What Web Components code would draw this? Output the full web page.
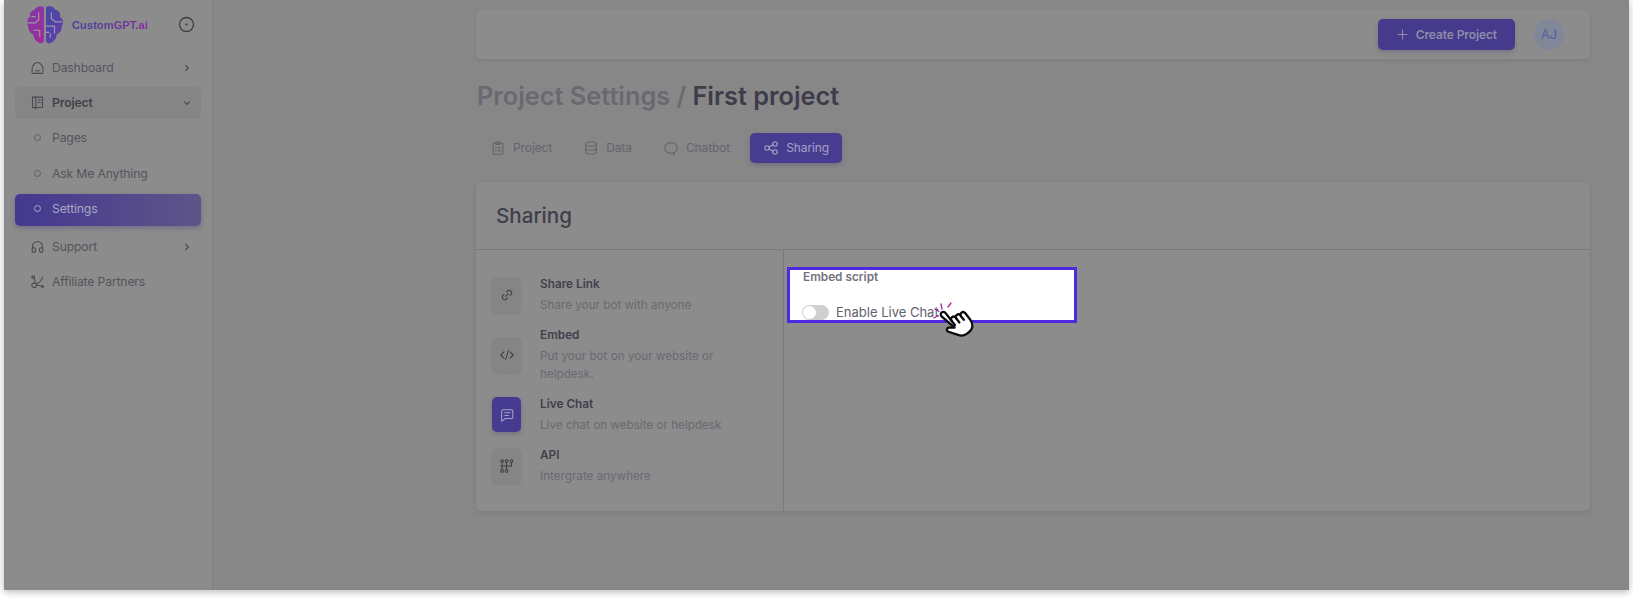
<!DOCTYPE html>
<html lang="en">
<head>
<meta charset="utf-8">
<title>Project Settings</title>
<style>
    html, body { margin: 0; padding: 0; background: #fff; }
    body { font-family: Inter, "Liberation Sans", sans-serif; }
</style>
</head>
<body>
<app-shell>
    <side-nav slot="side"></side-nav>
    <top-bar></top-bar>
    <page-heading muted="Project Settings /" strong="First project"></page-heading>
    <page-tabs></page-tabs>
    <share-card title-text="Sharing">
        <share-option slot="options" icon="link" name="Share Link" text="Share your bot with anyone"></share-option>
        <share-option slot="options" icon="code" name="Embed" text="Put your bot on your website or helpdesk."></share-option>
        <share-option slot="options" icon="chat" name="Live Chat" text="Live chat on website or helpdesk" active></share-option>
        <share-option slot="options" icon="api" name="API" text="Intergrate anywhere"></share-option>
        <embed-box></embed-box>
    </share-card>
    <click-hand slot="over"></click-hand>
</app-shell>

<script>
const ICONS = {
    home: '<path d="M2.500 10.500C2.500 6.500 6 3 9 3s6.500 3.500 6.500 7.500v4.500a1 1 0 0 1-1 1h-11a1 1 0 0 1-1-1z"/><path d="M6.500 12.500c1.500 1 3.500 1 5 0"/>',
    book: '<path d="M3 2.500h12v12.500h-8v1.800l-1.500-1.800H3z"/><path d="M7 2.500v12.500M10 6h2.500M10 9h2.500"/>',
    headset: '<path d="M3 12V9a6 6 0 0 1 12 0v3"/><rect x="2.500" y="10.500" width="4" height="5.500" rx="1.800"/><rect x="11.500" y="10.500" width="4" height="5.500" rx="1.800"/>',
    affiliate: '<circle cx="3.800" cy="3.800" r="1.600"/><circle cx="15" cy="15" r="1.100"/><circle cx="5" cy="13.500" r="2.800"/><path d="M5 5.200c1 2 1.300 3.500 1.200 5.800M7.800 13.500c2.500 0 4.500.5 6.200 1.200M7.500 11.500c3.500-.5 6-3 7.500-7.500"/>',
    clipboard: '<rect x="3.500" y="3.500" width="11" height="12.500" rx="1.500"/><rect x="6.500" y="2" width="5" height="3" rx="1"/><path d="M6 8.500h1M9 8.500h3M6 12h1M9 12h3"/>',
    database: '<ellipse cx="9" cy="4.500" rx="6" ry="2.500"/><path d="M3 4.500v9c0 1.400 2.700 2.500 6 2.500s6-1.100 6-2.500v-9M3 9c0 1.400 2.700 2.500 6 2.500s6-1.100 6-2.500"/>',
    bubble: '<path d="M9 3c4 0 7 2.300 7 5.800s-2.500 5.500-4.500 5.700l1 2.200-4-2.100C4.500 14.500 2 12.300 2 8.800S5 3 9 3z"/>',
    share: '<circle cx="4.500" cy="9" r="2.500"/><circle cx="13.500" cy="4.500" r="2.500"/><circle cx="13.500" cy="13.500" r="2.500"/><path d="M6.800 7.900l4.500-2.300M6.800 10.100l4.500 2.300"/>',
    link: '<path d="M7.500 10.500l3-3"/><path d="M8.500 5.500l1.500-1.500a3 3 0 0 1 4 4l-1.500 1.500"/><path d="M9.500 12.500l-1.500 1.500a3 3 0 0 1-4-4l1.500-1.500"/>',
    code: '<path d="M5.500 5.500L2 9l3.500 3.500M12.500 5.500L16 9l-3.500 3.500M10.500 4l-3 10"/>',
    chat: '<path d="M4.500 3h9.500a1.500 1.500 0 0 1 1.500 1.500v7a1.500 1.500 0 0 1-1.500 1.500H7l-4 3V4.500A1.500 1.500 0 0 1 4.500 3z"/><path d="M6.500 6.500h6M6.500 9.500h4"/>',
    api: '<circle cx="3.500" cy="3.500" r="1.500"/><circle cx="8.500" cy="3.500" r="1.500"/><circle cx="14" cy="3.500" r="1.500"/><circle cx="3.500" cy="14.500" r="1.500"/><circle cx="8.500" cy="14.500" r="1.500"/><path d="M3.500 5v8M8.500 5v8M14 5v4H2"/>'
};

function icon(name, size, width) {
    return `<svg width="${size}" height="${size}" viewBox="0 0 18 18" fill="none" stroke="currentColor" stroke-width="${width || 1.3}" stroke-linecap="round" stroke-linejoin="round">${ICONS[name]}</svg>`;
}

class AppShell extends HTMLElement {
    constructor() {
        super();
        this.attachShadow({ mode: 'open' });
        this.shadowRoot.innerHTML = `
            <style>
                :host { display: block; height: 598px; padding-left: 4px; box-sizing: border-box; overflow: hidden; }
                .window {
                    position: relative;
                    display: flex;
                    width: 1625px;
                    height: 590px;
                    background: #878787;
                    box-shadow: 0 2px 7px rgba(0, 0, 0, 0.28);
                }
                .content {
                    flex: 1;
                    min-width: 0;
                    padding: 10px 39px 0 263px;
                }
            </style>
            <div class="window">
                <slot name="side"></slot>
                <div class="content"><slot></slot></div>
                <slot name="over"></slot>
            </div>
        `;
    }
}
customElements.define('app-shell', AppShell);

class NavItem extends HTMLElement {
    constructor() {
        super();
        this.attachShadow({ mode: 'open' });
    }
    connectedCallback() {
        const ic = this.getAttribute('icon');
        const chevron = this.getAttribute('chevron');
        const lead = ic
            ? icon(ic, 15)
            : '<span class="dot"></span>';
        const chev = chevron === 'down'
            ? '<svg class="chev" width="12" height="12" viewBox="0 0 12 12" fill="none" stroke="currentColor" stroke-width="1.200" stroke-linecap="round" stroke-linejoin="round"><path d="M3.500 4.800L6 7.300l2.500-2.500"/></svg>'
            : chevron
                ? '<svg class="chev" width="12" height="12" viewBox="0 0 12 12" fill="none" stroke="currentColor" stroke-width="1.200" stroke-linecap="round" stroke-linejoin="round"><path d="M4.800 3.500L7.300 6 4.800 8.500"/></svg>'
                : '';
        this.shadowRoot.innerHTML = `
            <style>
                :host { display: block; margin-top: var(--nav-gap, 3px); }
                .row {
                    display: flex;
                    align-items: center;
                    height: 32px;
                    box-sizing: border-box;
                    padding: 0 8px 1px 15px;
                    border-radius: 5px;
                    font-size: 12.200px;
                    letter-spacing: -0.15px;
                    color: #55545c;
                }
                .lead { width: 15px; display: flex; justify-content: center; margin-right: 7px; color: #4a4a52; }
                .dot { width: 5px; height: 5px; border: 1.300px solid #5f5f66; border-radius: 50%; }
                .label { flex: 1; }
                .chev { color: #4a4a52; }
                :host([open]) .row { background: #858585; color: #41404a; font-weight: 600; }
                :host([current]) .row {
                    padding-bottom: 3px;
                    background: linear-gradient(90deg, #443890, #5e5589);
                    box-shadow: 0 2px 5px rgba(60, 50, 130, 0.35);
                    color: #a9a6c4;
                }
                :host([current]) .dot { border-color: #a9a6c4; border-width: 1.600px; }
            </style>
            <div class="row">
                <span class="lead">${lead}</span>
                <span class="label">${this.getAttribute('label')}</span>
                ${chev}
            </div>
        `;
    }
}
customElements.define('nav-item', NavItem);

class SideNav extends HTMLElement {
    constructor() {
        super();
        this.attachShadow({ mode: 'open' });
        this.shadowRoot.innerHTML = `
            <style>
                :host {
                    display: block;
                    flex: none;
                    width: 209px;
                    box-sizing: border-box;
                    background: #8c8c8c;
                    border-right: 1px solid #828282;
                    font-family: Inter, "Liberation Sans", sans-serif;
                }
                .brand {
                    display: flex;
                    align-items: center;
                    height: 49px;
                    padding-left: 22px;
                    padding-right: 17px;
                    box-sizing: border-box;
                }
                .name {
                    flex: 1;
                    margin-left: 8px;
                    font: 700 11.200px "Liberation Sans", sans-serif;
                    background: linear-gradient(90deg, #3f3fa0, #a12c98);
                    -webkit-background-clip: text;
                    background-clip: text;
                    color: transparent;
                }
                .nav { padding: 0 11px 0 11px; }
                .ask { --nav-gap: 4px; }
                .gap { --nav-gap: 5px; }
            </style>
            <div class="brand">
                <svg width="38" height="38" viewBox="1 1 36 36">
                    <defs>
                        <linearGradient id="l" x1="0" y1="0" x2="1" y2="1"><stop offset="0" stop-color="#7b3aa6"/><stop offset="1" stop-color="#a32c98"/></linearGradient>
                        <linearGradient id="r" x1="0" y1="0" x2="1" y2="1"><stop offset="0" stop-color="#3f4aa8"/><stop offset="1" stop-color="#6c3ba6"/></linearGradient>
                    </defs>
                    <path fill="url(#l)" d="M18 2c-4-2-8 0-9 3-3 0-5 3-4 6-3 2-4 6-2 9 0 4 2 7 5 8 0 4 3 7 6 8 2 1 4 0 4-2z"/>
                    <path fill="url(#r)" d="M20 2c4-2 8 0 9 3 3 0 5 3 4 6 3 2 4 6 2 9 0 4-2 7-5 8 0 4-3 7-6 8-2 1-4 0-4-2z"/>
                    <g fill="none" stroke="#9c97ad" stroke-width="1.100">
                        <path d="M2 17h8l3-3V7M8 24h6v6M6 11h4M25 7v6l4 3h6M20 20h8v7M24 31v-4M20 26h3"/>
                    </g>
                </svg>
                <span class="name">CustomGPT.ai</span>
                <svg width="17" height="17" viewBox="0 0 17 17" fill="none" stroke="#3e3e46" stroke-width="1.300"><circle cx="8.500" cy="8.500" r="7"/><circle cx="8.500" cy="8.500" r="1.100" fill="#3e3e46" stroke="none"/></svg>
            </div>
            <div class="nav">
                <nav-item icon="home" label="Dashboard" chevron="right"></nav-item>
                <nav-item icon="book" label="Project" chevron="down" open></nav-item>
                <nav-item label="Pages"></nav-item>
                <nav-item class="ask" label="Ask Me Anything"></nav-item>
                <nav-item class="ask" label="Settings" current></nav-item>
                <nav-item class="gap" icon="headset" label="Support" chevron="right"></nav-item>
                <nav-item icon="affiliate" label="Affiliate Partners"></nav-item>
            </div>
        `;
    }
}
customElements.define('side-nav', SideNav);

class TopBar extends HTMLElement {
    constructor() {
        super();
        this.attachShadow({ mode: 'open' });
        this.shadowRoot.innerHTML = `
            <style>
                :host {
                    display: flex;
                    align-items: center;
                    justify-content: flex-end;
                    gap: 19px;
                    height: 49px;
                    padding-right: 26px;
                    background: #8c8c8c;
                    border-radius: 5px;
                    box-shadow: 0 2px 4px rgba(0, 0, 0, 0.06);
                }
                .btn {
                    display: flex;
                    align-items: center;
                    gap: 8px;
                    height: 31px;
                    padding: 0 18px 0 19px;
                    background: #453a8b;
                    border-radius: 5px;
                    box-shadow: 0 2px 4px rgba(50, 40, 110, 0.25);
                    color: #8f8ca9;
                    font-size: 12px;
                    letter-spacing: -0.1px;
                    font-weight: 600;
                }
                .avatar {
                    display: flex;
                    align-items: center;
                    justify-content: center;
                    width: 30px;
                    height: 31px;
                    border-radius: 50%;
                    background: #808799;
                    color: #54609a;
                    font-size: 12.500px;
                }
            </style>
            <div class="btn">
                <svg width="11" height="11" viewBox="0 0 11 11" stroke="currentColor" stroke-width="1.100" stroke-linecap="round"><path d="M5.500 1v9M1 5.500h9"/></svg>
                <span>Create Project</span>
            </div>
            <div class="avatar">AJ</div>
        `;
    }
}
customElements.define('top-bar', TopBar);

class PageHeading extends HTMLElement {
    constructor() {
        super();
        this.attachShadow({ mode: 'open' });
    }
    connectedCallback() {
        this.shadowRoot.innerHTML = `
            <style>
                :host {
                    display: block;
                    margin-top: 20px;
                    padding-left: 1px;
                    font-size: 25.300px;
                    line-height: 34px;
                    font-weight: 600;
                    color: #6a6971;
                }
                b { font-weight: 600; color: #3d3c49; }
            </style>
            ${this.getAttribute('muted')} <b>${this.getAttribute('strong')}</b>
        `;
    }
}
customElements.define('page-heading', PageHeading);

class PageTabs extends HTMLElement {
    constructor() {
        super();
        this.attachShadow({ mode: 'open' });
        const tabs = [['clipboard', 'Project'], ['database', 'Data'], ['bubble', 'Chatbot'], ['share', 'Sharing']];
        this.shadowRoot.innerHTML = `
            <style>
                :host { display: flex; gap: 5px; margin-top: 20px; padding-left: 1px; }
                .tab {
                    display: flex;
                    align-items: center;
                    gap: 7px;
                    height: 30px;
                    padding: 0 13px;
                    border-radius: 5px;
                    color: #66656d;
                    font-size: 12px;
                    letter-spacing: -0.1px;
                }
                .tab span { position: relative; top: -1px; }
                .tab.on {
                    margin-left: 2px;
                    background: #483c91;
                    box-shadow: 0 2px 4px rgba(50, 40, 110, 0.25);
                    color: #a5a2c6;
                }
            </style>
            ${tabs.map((t, i) => `<div class="tab${i === 3 ? ' on' : ''}">${icon(t[0], 16)}<span>${t[1]}</span></div>`).join('')}
        `;
    }
}
customElements.define('page-tabs', PageTabs);

class ShareCard extends HTMLElement {
    constructor() {
        super();
        this.attachShadow({ mode: 'open' });
    }
    connectedCallback() {
        this.shadowRoot.innerHTML = `
            <style>
                :host {
                    display: block;
                    margin-top: 19px;
                    background: #8c8c8c;
                    border-radius: 5px;
                    box-shadow: 0 2px 4px rgba(0, 0, 0, 0.08);
                }
                h2 {
                    margin: 0;
                    height: 68px;
                    box-sizing: border-box;
                    padding-left: 20px;
                    display: flex;
                    align-items: center;
                    border-bottom: 1px solid #7a7a7a;
                    font-size: 20.600px;
                    font-weight: 500;
                    color: #3f3e4a;
                }
                .body { display: flex; }
                .options {
                    width: 308px;
                    box-sizing: border-box;
                    padding: 25px 16px 26px 16px;
                    border-right: 1px solid #7a7a7a;
                    display: flex;
                    flex-direction: column;
                    gap: 12px;
                }
                .detail { flex: 1; padding: 17px 0 0 3px; }
            </style>
            <h2>${this.getAttribute('title-text')}</h2>
            <div class="body">
                <div class="options"><slot name="options"></slot></div>
                <div class="detail"><slot></slot></div>
            </div>
        `;
    }
}
customElements.define('share-card', ShareCard);

class ShareOption extends HTMLElement {
    constructor() {
        super();
        this.attachShadow({ mode: 'open' });
    }
    connectedCallback() {
        this.shadowRoot.innerHTML = `
            <style>
                :host { display: flex; align-items: center; gap: 19px; }
                .box {
                    flex: none;
                    display: flex;
                    align-items: center;
                    justify-content: center;
                    width: 29px;
                    height: 35px;
                    border-radius: 5px;
                    background: #858585;
                    box-shadow: 0 2px 3px rgba(0, 0, 0, 0.07);
                    color: #3f3f47;
                }
                :host([active]) .box {
                    background: #473b91;
                    color: #a5a2c6;
                    box-shadow: 0 2px 4px rgba(50, 40, 110, 0.25);
                }
                .name { font-size: 11.800px; line-height: 18px; font-weight: 600; color: #41404c; margin-bottom: 3px; }
                .text { font-size: 11.700px; line-height: 18px; color: #6a6971; max-width: 210px; }
            </style>
            <div class="box">${icon(this.getAttribute('icon'), 16, 1.2)}</div>
            <div>
                <div class="name">${this.getAttribute('name')}</div>
                <div class="text">${this.getAttribute('text')}</div>
            </div>
        `;
    }
}
customElements.define('share-option', ShareOption);

class EmbedBox extends HTMLElement {
    constructor() {
        super();
        this.attachShadow({ mode: 'open' });
        this.shadowRoot.innerHTML = `
            <style>
                :host {
                    display: block;
                    width: 290px;
                    height: 56px;
                    box-sizing: border-box;
                    border: 3px solid #4d29e0;
                    background: #fff;
                    padding: 0 0 0 13px;
                    overflow: hidden;
                }
                .label { font-size: 11.800px; line-height: 15px; font-weight: 600; color: #74737f; }
                .toggle-row { display: flex; align-items: center; gap: 7px; margin: 20px 0 0 -1px; }
                .toggle {
                    position: relative;
                    width: 27px;
                    height: 15px;
                    border-radius: 8px;
                    background: #cfcfcf;
                }
                .toggle::after {
                    content: '';
                    position: absolute;
                    left: 1px;
                    top: 1px;
                    width: 13px;
                    height: 13px;
                    border-radius: 50%;
                    background: #fff;
                }
                .text { font-size: 13px; line-height: 15px; color: #62616f; }
            </style>
            <div class="label">Embed script</div>
            <div class="toggle-row">
                <span class="toggle"></span>
                <span class="text">Enable Live Chat</span>
            </div>
        `;
    }
}
customElements.define('embed-box', EmbedBox);

class ClickHand extends HTMLElement {
    constructor() {
        super();
        this.attachShadow({ mode: 'open' });
        this.shadowRoot.innerHTML = `
            <style>
                :host { position: absolute; left: 923px; top: 297px; width: 56px; height: 48px; }
                svg { display: block; }
            </style>
            <svg width="56" height="48" viewBox="0 0 56 48">
                <g stroke="#b01fa8" stroke-width="1.300" stroke-linecap="round">
                    <path d="M14 7l1 5M24 6l-3 4M8 12l4 2.500M7 21l4-2.500"/>
                </g>
                <g transform="translate(14 15) rotate(-38 0 0) scale(1.120)">
                    <path fill="#fff" stroke="#0c0c0c" stroke-width="2.100" stroke-linejoin="round" stroke-linecap="round" d="M-2 3a2.300 2.300 0 0 1 4.600 0v9a2.300 2.300 0 0 1 4.600 0v1a2.300 2.300 0 0 1 4.600 0v1a2.300 2.300 0 0 1 4.600 0v7c0 5-3 8.500-8 8.500h-2c-3.500 0-5.500-1.500-7-4l-5-7.500c-1.300-2.200 1.300-4 3-2.500l3.600 3z"/>
                    <path fill="none" stroke="#0c0c0c" stroke-width="2" stroke-linecap="round" d="M2.600 12v5M7.200 13v4.500M11.800 14v4"/>
                </g>
            </svg>
        `;
    }
}
customElements.define('click-hand', ClickHand);
</script>
</body>
</html>
